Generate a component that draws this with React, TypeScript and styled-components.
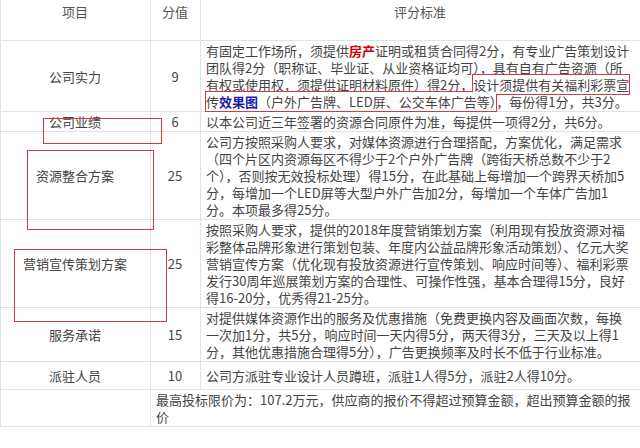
import styled, { createGlobalStyle } from 'styled-components';

const Global = createGlobalStyle`
  body { margin: 0; background: #fff; font-family: "Noto Sans CJK SC", "Liberation Sans", sans-serif; }
`;

const Page = styled.div`
  width: 640px;
  height: 448px;
  overflow: hidden;
  position: relative;
`;

const Table = styled.table`
  width: 640px;
  border-collapse: collapse;
  table-layout: fixed;
  font-size: 13px;
  line-height: 17px;
  color: #444;
  margin-top: -4px;

  td, th {
    border: 1px solid #e2e2e2;
    padding: 1px 6px 1px 5px;
    vertical-align: middle;
  }
  th { font-weight: normal; color: #555; height: 36px; vertical-align: top; padding-top: 6px; }
`;

const Center = styled.td`
  text-align: center;
`;

const Red = styled.span`
  color: #d10000;
  font-weight: bold;
`;

const Blue = styled.span`
  color: #1a1aa8;
  font-weight: bold;
`;

const Boxed = styled.span`
  outline: 1.5px solid #d6374b;
`;

const Frame = styled.div<{ $l: number; $t: number; $w: number; $h: number }>`
  position: absolute;
  left: ${p => p.$l}px;
  top: ${p => p.$t}px;
  width: ${p => p.$w}px;
  height: ${p => p.$h}px;
  border: 1.5px solid #d6374b;
  pointer-events: none;
`;

export default function App() {
  return (
    <Page>
      <Global />
      <Table>
        <colgroup>
          <col style={{ width: 150 }} />
          <col style={{ width: 50 }} />
          <col style={{ width: 440 }} />
        </colgroup>
        <thead>
          <tr><th>项目</th><th>分值</th><th>评分标准</th></tr>
        </thead>
        <tbody>
          <tr>
            <Center>公司实力</Center>
            <Center>9</Center>
            <td>有固定工作场所，须提供<Red>房产</Red>证明或租赁合同得2分，有专业广告策划设计团队得2分（职称证、毕业证、从业资格证均可），具有自有广告资源（所有权或使用权，须提供证明材料原件）得2分，<Boxed>设计须提供有关福利彩票宣传<Blue>效果图</Blue>（户外广告牌、LED屏、公交车体广告等）</Boxed>，每份得1分，共3分。</td>
          </tr>
          <tr>
            <Center>公司业绩</Center>
            <Center>6</Center>
            <td>以本公司近三年签署的资源合同原件为准，每提供一项得2分，共6分。</td>
          </tr>
          <tr>
            <Center>资源整合方案</Center>
            <Center>25</Center>
            <td>公司方按照采购人要求，对媒体资源进行合理搭配，方案优化，满足需求（四个片区内资源每区不得少于2个户外广告牌（跨街天桥总数不少于2个），否则按无效投标处理）得15分，在此基础上每增加一个跨界天桥加5分，每增加一个LED屏等大型户外广告加2分，每增加一个车体广告加1分。本项最多得25分。</td>
          </tr>
          <tr>
            <Center>营销宣传策划方案</Center>
            <Center>25</Center>
            <td>按照采购人要求，提供的2018年度营销策划方案（利用现有投放资源对福彩整体品牌形象进行策划包装、年度内公益品牌形象活动策划）、亿元大奖营销宣传方案（优化现有投放资源进行宣传策划、响应时间等）、福利彩票发行30周年巡展策划方案的合理性、可操作性强，基本合理得15分，良好得16-20分，优秀得21-25分。</td>
          </tr>
          <tr>
            <Center>服务承诺</Center>
            <Center>15</Center>
            <td>对提供媒体资源作出的服务及优惠措施（免费更换内容及画面次数，每换一次加1分，共5分，响应时间一天内得5分，两天得3分，三天及以上得1分，其他优惠措施合理得5分），广告更换频率及时长不低于行业标准。</td>
          </tr>
          <tr style={{ height: 28 }}>
            <Center>派驻人员</Center>
            <Center>10</Center>
            <td>公司方派驻专业设计人员蹲班，派驻1人得5分，派驻2人得10分。</td>
          </tr>
          <tr>
            <td></td>
            <td colSpan={2}>最高投标限价为：107.2万元，供应商的报价不得超过预算金额，超出预算金额的报价</td>
          </tr>
        </tbody>
      </Table>
      <Frame $l={43} $t={118} $w={117} $h={24} />
      <Frame $l={27} $t={150} $w={125} $h={78} />
      <Frame $l={14} $t={249} $w={151} $h={71} />
    </Page>
  );
}
